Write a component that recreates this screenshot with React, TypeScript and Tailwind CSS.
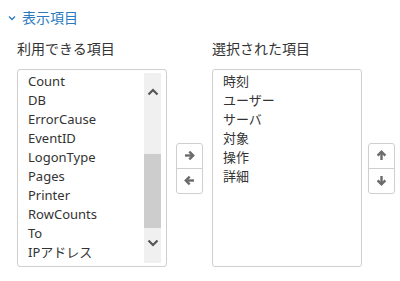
import React from "react";

const font = { fontFamily: '"Noto Sans", "Noto Sans CJK JP", sans-serif' };

const available = ["Count", "DB", "ErrorCause", "EventID", "LogonType", "Pages", "Printer", "RowCounts", "To", "IPアドレス"];
const selected = ["時刻", "ユーザー", "サーバ", "対象", "操作", "詳細"];

function Chevron({ up }: { up?: boolean }) {
  return (
    <svg width="12" height="8" viewBox="0 0 12 8">
      <path
        d={up ? "M1.5 6.5 L6 2 L10.5 6.5" : "M1.5 1.5 L6 6 L10.5 1.5"}
        fill="none"
        stroke="#555"
        strokeWidth="2.2"
      />
    </svg>
  );
}

function Arrow({ rot }: { rot: number }) {
  return (
    <svg width="11" height="11" viewBox="0 0 11 11" style={{ transform: `rotate(${rot}deg)` }}>
      <path d="M1 5.5 H9" stroke="#6b6b6b" strokeWidth="2.4" fill="none" />
      <path d="M5.3 1.6 L9.2 5.5 L5.3 9.4" stroke="#6b6b6b" strokeWidth="2.4" fill="none" strokeLinejoin="miter" />
    </svg>
  );
}

function BtnPair({ a, b }: { a: React.ReactNode; b: React.ReactNode }) {
  return (
    <div className="flex w-[27px] flex-col rounded-[3px] border border-[#cfcfcf] bg-white">
      <div className="flex h-[25px] items-center justify-center border-b border-[#cfcfcf]">{a}</div>
      <div className="flex h-[24px] items-center justify-center">{b}</div>
    </div>
  );
}

export default function App() {
  return (
    <div className="h-[281px] w-[400px] bg-white pl-[8px] pt-[7px] text-[#333]" style={font}>
      <div className="flex h-[20px] items-center text-[14px] text-[#2a7ac0]">
        <svg width="8" height="6" viewBox="0 0 8 6" className="mr-[6px] mt-[1px]">
          <path d="M1 1.5 L4 4.5 L7 1.5" fill="none" stroke="#2a7ac0" strokeWidth="1.3" />
        </svg>
        <span>表示項目</span>
      </div>
      <div className="ml-[9px] mt-[12px] grid grid-cols-[150px_27px_150px_27px] gap-x-[9px]">
        <div className="h-[20px] text-[14px] leading-[20px] text-[#333]">利用できる項目</div>
        <div />
        <div className="h-[20px] text-[14px] leading-[20px] text-[#333]">選択された項目</div>
        <div />
        <div className="relative mt-[10px] h-[198px] rounded-[3px] border border-[#cfcfcf] bg-white">
          <div className="pl-[10px] pt-[2px] text-[13px] leading-[19px]">
            {available.map((t) => (
              <div key={t}>{t}</div>
            ))}
          </div>
          <div className="absolute right-[5px] top-[3px] flex h-[190px] w-[17px] flex-col bg-[#f0f0f0]">
            <div className="flex h-[36px] items-center justify-center pt-[2px]">
              <Chevron up />
            </div>
            <div className="mt-[45px] h-[74px] bg-[#cdcdcd]" />
            <div className="flex flex-1 items-center justify-center pb-[6px]">
              <Chevron />
            </div>
          </div>
        </div>
        <div className="flex items-center pt-[10px]">
          <BtnPair a={<Arrow rot={0} />} b={<Arrow rot={180} />} />
        </div>
        <div className="mt-[10px] h-[198px] rounded-[3px] border border-[#cfcfcf] bg-white pl-[10px] pt-[2px] text-[13px] leading-[19px]">
          {selected.map((t) => (
            <div key={t}>{t}</div>
          ))}
        </div>
        <div className="-ml-[3px] flex items-center pt-[10px]">
          <BtnPair a={<Arrow rot={-90} />} b={<Arrow rot={90} />} />
        </div>
      </div>
    </div>
  );
}
